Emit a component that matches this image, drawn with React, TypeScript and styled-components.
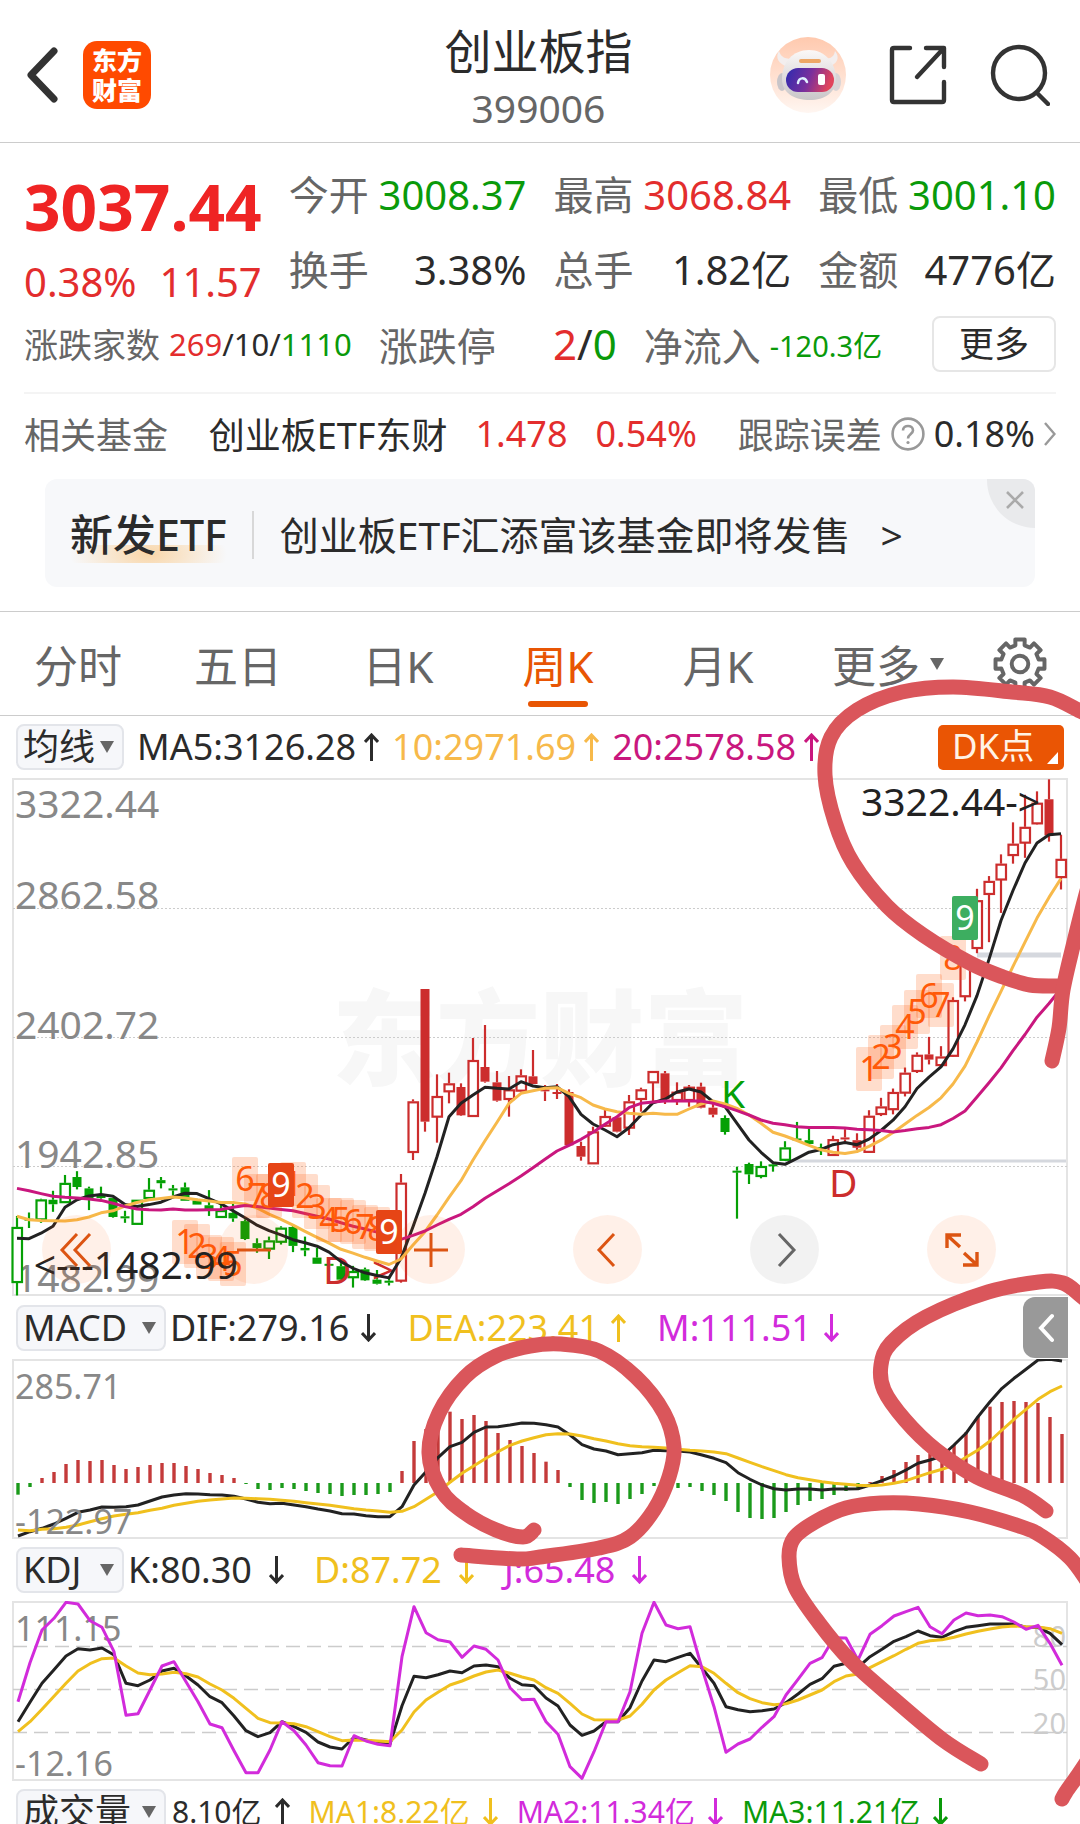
import React from "react";
import styled, { createGlobalStyle } from "styled-components";

const RED = "#e32d2d";
const GREEN = "#0a9a0a";
const INK = "#2b2b2b";
const GREY = "#666";
const ORANGE = "#e85504";
const GOLD = "#f0c01e";
const AMBER = "#f7b94a";
const MAGENTA = "#c9177e";
const VIOLET = "#d22bdb";
const FRAME = "#e4e4e4";
const UP = "#cc2d2d";
const DOWN = "#05a005";

const GlobalStyle = createGlobalStyle`
  *, *::before, *::after { box-sizing: border-box; }
  body {
    margin: 0;
    background: #fff;
    color: ${INK};
    font-family: "Noto Sans", "Noto Sans CJK SC", sans-serif;
  }
  button, select { font-family: inherit; color: inherit; background: none; border: 0; padding: 0; margin: 0; cursor: pointer; }
  a { color: inherit; text-decoration: none; }
  svg { display: block; }
`;

/* ---------- page shell ---------- */

const Page = styled.div`
  position: relative;
  height: 100vh;
  overflow: hidden;
  background: #fff;
`;

const Header = styled.header`
  display: grid;
  grid-template-columns: 1fr auto 1fr;
  align-items: center;
  height: 143px;
  padding: 0 30px 0 27px;
  border-bottom: 1px solid #ccc;
`;

const HeaderSide = styled.div<{ $end?: boolean }>`
  display: flex;
  align-items: center;
  gap: ${(p) => (p.$end ? 43 : 25)}px;
  justify-content: ${(p) => (p.$end ? "flex-end" : "flex-start")};
  padding-top: 8px;
`;

const IconButton = styled.button`
  display: grid;
  place-items: center;
`;

const Logo = styled.a`
  display: grid;
  place-content: center;
  width: 68px;
  height: 68px;
  border-radius: 14px;
  background: #ff4a00;
  color: #fff;
  font-size: 25px;
  font-weight: 900;
  line-height: 30px;
  text-align: center;
`;

const TitleBlock = styled.div`
  padding-top: 14px;
  text-align: center;
`;

const Title = styled.h1`
  margin: 0;
  font-size: 47px;
  font-weight: 400;
  line-height: 60px;
`;

const Code = styled.div`
  font-size: 39px;
  line-height: 54px;
  color: ${GREY};
`;

/* ---------- quote ---------- */

const Quote = styled.section`
  padding: 14px 24px 0;
`;

const QuoteGrid = styled.div`
  display: grid;
  grid-template-columns: repeat(4, 1fr);
  column-gap: 27px;
`;

const PriceColumn = styled.div`
  display: flex;
  flex-direction: column;
  padding-top: 12px;
  height: 150px;
  color: ${RED};
`;

const Price = styled.div`
  font-size: 64px;
  font-weight: 700;
  line-height: 75px;
  color: #ef2424;
`;

const Change = styled.div`
  display: flex;
  justify-content: space-between;
  font-size: 40px;
  line-height: 75px;
`;

const StatColumn = styled.div`
  display: flex;
  flex-direction: column;
`;

const Stat = styled.div`
  display: flex;
  justify-content: space-between;
  align-items: center;
  font-size: 40px;
  line-height: 75px;
  white-space: nowrap;
`;

const Label = styled.span<{ $size?: number }>`
  color: ${GREY};
  font-size: ${(p) => p.$size ?? 40}px;
`;

const Value = styled.span<{ $color?: string; $size?: number }>`
  color: ${(p) => p.$color ?? INK};
  font-size: ${(p) => (p.$size ? `${p.$size}px` : "inherit")};
`;

const BreadthRow = styled.div`
  display: flex;
  align-items: center;
  height: 87px;
  padding-bottom: 12px;
  border-bottom: 2px solid #f4f4f4;
  white-space: nowrap;
`;

const Breadth = styled.div<{ $width?: number }>`
  display: flex;
  align-items: center;
  justify-content: ${(p) => (p.$width ? "space-between" : "flex-start")};
  gap: 9px;
  width: ${(p) => (p.$width ? `${p.$width}px` : "auto")};
  margin-right: 27px;
`;

const MoreButton = styled.button`
  margin-left: auto;
  width: 124px;
  height: 56px;
  border: 2px solid #e6e6e6;
  border-radius: 8px;
  font-size: 35px;
  line-height: 48px;
`;

const FundRow = styled.a`
  display: flex;
  align-items: center;
  justify-content: space-between;
  height: 79px;
  font-size: 36px;
  white-space: nowrap;
`;

const FundGroup = styled.span<{ $gap: number }>`
  display: flex;
  align-items: center;
  gap: ${(p) => p.$gap}px;
`;

const Banner = styled.aside`
  position: relative;
  display: flex;
  align-items: center;
  height: 108px;
  margin: 6px 45px 24px;
  padding: 4px 26px 0 25px;
  border-radius: 12px;
  background: #f7f8fa;
  overflow: hidden;
  white-space: nowrap;
`;

const BannerTag = styled.strong`
  font-size: 43px;
  font-weight: 500;
  line-height: 60px;
  background: radial-gradient(ellipse 50% 200% at 50% 50%, #f9d6a8, rgba(249, 214, 168, 0)) no-repeat center 40px / 100% 18px;
`;

const BannerLink = styled.a`
  display: flex;
  gap: 30px;
  margin-left: 25px;
  padding-left: 26px;
  border-left: 2px solid #d8d8d8;
  font-size: 39px;
  line-height: 48px;
`;

const BannerClose = styled.button`
  position: absolute;
  top: 0;
  right: 0;
  width: 48px;
  height: 49px;
  padding: 0 0 8px 8px;
  display: grid;
  place-items: center;
  border-bottom-left-radius: 48px;
  background: #e9eaec;
`;

/* ---------- tabs ---------- */

const Tabs = styled.nav`
  display: grid;
  grid-template-columns: repeat(6, 4fr) 3fr;
  height: 105px;
  border-top: 1px solid #ccc;
  border-bottom: 1px solid #ccc;
`;

const Tab = styled.button<{ $active?: boolean }>`
  display: flex;
  align-items: center;
  justify-content: center;
  gap: 10px;
  position: relative;
  font-size: 44px;
  padding-right: 4px;
  color: ${(p) => (p.$active ? ORANGE : GREY)};
  &::after {
    content: "";
    display: ${(p) => (p.$active ? "block" : "none")};
    position: absolute;
    bottom: 8px;
    width: 60px;
    height: 6px;
    border-radius: 3px;
    background: ${ORANGE};
  }
`;

const MoreTab = styled(Tab)`
  padding-left: 20px;
`;

/* ---------- indicators ---------- */

const IndicatorBar = styled.div<{ $height: number }>`
  display: flex;
  align-items: center;
  height: ${(p) => p.$height}px;
  padding: 0 12px 0 16px;
  white-space: nowrap;
`;

const Picker = styled.label<{ $width: number }>`
  display: grid;
  align-items: center;
  flex: none;
  width: ${(p) => p.$width}px;
  height: 46px;
  border: 2px solid #e3e5ea;
  border-radius: 8px;
  background: #f6f7fa;
  & > * { grid-area: 1 / 1; }
  & > svg { justify-self: end; margin-right: 8px; pointer-events: none; }
`;

const PickerSelect = styled.select`
  appearance: none;
  width: 100%;
  height: 42px;
  padding-left: 5px;
  font-size: 36px;
  line-height: 42px;
  outline: none;
`;

const Readings = styled.div<{ $indent: number; $gap: number; $arrowGap: number; $size?: number }>`
  display: flex;
  gap: ${(p) => p.$gap}px;
  margin-left: ${(p) => p.$indent}px;
  font-size: ${(p) => p.$size ?? 36}px;
  line-height: 48px;
  & > span { gap: ${(p) => p.$arrowGap}px; }
`;

const ReadingItem = styled.span<{ $color: string }>`
  display: flex;
  align-items: center;
  color: ${(p) => p.$color};
`;

const DkButton = styled.button`
  display: flex;
  align-items: flex-end;
  justify-content: space-between;
  margin-left: auto;
  margin-right: 4px;
  width: 126px;
  height: 45px;
  padding: 0 6px 6px 14px;
  border-radius: 5px;
  background: #ea5504;
  color: #fff3e6;
  font-size: 35px;
  line-height: 36px;
`;

const CollapseButton = styled.button`
  display: grid;
  place-items: center;
  margin-left: auto;
  width: 45px;
  height: 61px;
  border-radius: 12px 0 0 12px;
  background: #999;
`;

const ChartPanel = styled.section`
  position: relative;
`;

const ChartSvg = styled.svg`
  width: 100%;
  height: auto;
  font-family: "Noto Sans", "Noto Sans CJK SC", sans-serif;
`;

const ChartControls = styled.div`
  position: absolute;
  left: 0;
  right: 0;
  bottom: 12px;
  display: flex;
  justify-content: space-between;
  padding: 0 84px 0 42px;
`;

const RoundButton = styled.button<{ $muted?: boolean }>`
  display: grid;
  place-items: center;
  width: 69px;
  height: 69px;
  border-radius: 50%;
  background: ${(p) => (p.$muted ? "rgba(0, 0, 0, 0.05)" : "rgba(255, 85, 0, 0.09)")};
  color: ${(p) => (p.$muted ? GREY : "#dc5412")};
`;

const InkLayer = styled.svg`
  position: absolute;
  top: 0;
  left: 0;
  width: 100%;
  height: auto;
  pointer-events: none;
`;

/* ---------- icons ---------- */

const Caret = ({ w = 14, h = 12 }: { w?: number; h?: number }) => (
  <svg width={w} height={h} viewBox="0 0 14 12" aria-hidden="true">
    <path d="M0 0H14L7 12Z" fill="#666" />
  </svg>
);

const Arrow = ({ down }: { down?: boolean }) => (
  <svg width="15" height="28" viewBox="0 0 15 28" fill="none" stroke="currentColor" strokeWidth="3" role="img" aria-label={down ? "down" : "up"}>
    <path d={down ? "M7.5 0V26M1 19L7.5 26L14 19" : "M7.5 28V2M1 9L7.5 2L14 9"} />
  </svg>
);

const BackIcon = () => (
  <svg width="31" height="56" viewBox="0 0 31 56" fill="none" stroke="#333" strokeWidth="7" strokeLinecap="round" strokeLinejoin="round">
    <path d="M27 4L4 28L27 52" />
  </svg>
);

const Robot = () => (
  <svg width="76" height="76" viewBox="0 0 76 76">
    <defs>
      <linearGradient id="halo" x1="0" y1="0" x2="0" y2="1">
        <stop offset="0" stopColor="#ffc9ae" />
        <stop offset="1" stopColor="#fff6f1" />
      </linearGradient>
      <linearGradient id="visor" x1="0" y1="0" x2="1" y2="0.2">
        <stop offset="0" stopColor="#2d2bb0" />
        <stop offset="0.55" stopColor="#7a2f9c" />
        <stop offset="1" stopColor="#e0445c" />
      </linearGradient>
      <linearGradient id="shell" x1="0" y1="0" x2="0" y2="1">
        <stop offset="0" stopColor="#fbf8f7" />
        <stop offset="1" stopColor="#c9c6c8" />
      </linearGradient>
    </defs>
    <circle cx="38" cy="38" r="38" fill="url(#halo)" />
    <path d="M18 30C8 27 5 20 9 14C11 21 16 22 24 22ZM58 30C68 27 70 20 65 14C64 21 59 22 52 22Z" fill="#f3eeee" />
    <ellipse cx="12" cy="45" rx="5" ry="9" fill="#c8c5c9" />
    <ellipse cx="66" cy="45" rx="5" ry="9" fill="#d8d4d6" />
    <path d="M39 13C55 13 66 26 66 42C66 56 54 63 40 63C24 63 12 56 12 42C12 25 23 13 39 13Z" fill="url(#shell)" />
    <rect x="29" y="22" width="22" height="4" rx="2" fill="#eda766" />
    <rect x="16" y="31" width="48" height="24" rx="12" fill="url(#visor)" />
    <path d="M28 46C29 40 35 40 37 45" stroke="#dff0ff" strokeWidth="2.5" fill="none" strokeLinecap="round" />
    <rect x="48" y="37" width="7" height="11" rx="2" fill="#fff" />
  </svg>
);

const ShareIcon = () => (
  <svg width="58" height="60" viewBox="0 0 58 60" fill="none" stroke="#333" strokeWidth="4.4" strokeLinecap="round" strokeLinejoin="round">
    <path d="M21 3H5Q3 3 3 5V55Q3 57 5 57H53Q55 57 55 55V37M37 3H55V22M54 4L28 32" />
  </svg>
);

const SearchIcon = () => (
  <svg width="60" height="62" viewBox="0 0 60 62" fill="none" stroke="#333" strokeWidth="4.4" strokeLinecap="round">
    <circle cx="29" cy="29" r="26" />
    <path d="M47 49L58 60" />
  </svg>
);

const HelpIcon = () => (
  <svg width="34" height="34" viewBox="0 0 34 34" fill="none" stroke="#999" strokeWidth="2.6" role="img" aria-label="help">
    <circle cx="17" cy="17" r="15.4" />
    <path d="M12 13.5C12 7.5 22 7.5 22 13.5C22 17 17 17 17 21.5" />
    <circle cx="17" cy="25.5" r="1.6" fill="#999" stroke="none" />
  </svg>
);

const Chevron = () => (
  <svg width="12" height="24" viewBox="0 0 12 24" fill="none" stroke="#999" strokeWidth="2.4">
    <path d="M1 1L10.5 12L1 23" />
  </svg>
);

/* eight blunt teeth around a hub */
const GearIcon = () => {
  const teeth = 8;
  const pts: string[] = [];
  for (let i = 0; i < teeth; i++) {
    const base = (i * 2 * Math.PI) / teeth - Math.PI / 2;
    [
      [-0.24, 18.5],
      [-0.19, 24],
      [0.19, 24],
      [0.24, 18.5],
    ].forEach(([a, r]) => pts.push(`${26 + r * Math.cos(base + a)} ${26 + r * Math.sin(base + a)}`));
  }
  return (
    <svg width="54" height="54" viewBox="0 0 52 52" fill="none" stroke="#666" strokeWidth="3.8" strokeLinejoin="round">
      <path d={`M${pts.join("L")}Z`} />
      <circle cx="26" cy="26" r="8" />
    </svg>
  );
};

const Glyph = ({ d, size = 36, w = 3 }: { d: string; size?: number; w?: number }) => (
  <svg width={size} height={size} viewBox="0 0 36 36" fill="none" stroke="currentColor" strokeWidth={w}>
    <path d={d} />
  </svg>
);

/* ---------- chart data: vertical positions, one entry per week ---------- */

const X0 = 17;
const STEP = 12;
const cx = (i: number) => X0 + STEP * i;

const scaled = (k: number, o: number, v: number[]) => v.map((n) => n / k + o);
const line = (ys: number[], dx = 0) => ys.map((y, i) => `${i ? "L" : "M"}${cx(i) + dx} ${y.toFixed(1)}`).join("");

const outer = (v: number[]) => scaled(2.904, -8, v);
const inner = (v: number[]) => scaled(3, 182, v);

/* body top, body bottom, high, low, filled */
type Candle = [number, number, number, number, 0 | 1];

const EARLY: Candle[] = [
  [1327, 1487, 1295, 1526, 0], [1303, 1308, 1285, 1330, 1], [1247, 1305, 1245, 1315, 0], [1248, 1261, 1222, 1283, 1],
  [1199, 1255, 1176, 1257, 0], [1182, 1211, 1165, 1218, 1], [1215, 1245, 1210, 1278, 1], [1237, 1243, 1210, 1245, 1],
  [1243, 1298, 1243, 1300, 1], [1296, 1302, 1280, 1315, 1], [1248, 1318, 1248, 1318, 0], [1219, 1243, 1185, 1250, 0],
  [1191, 1200, 1182, 1215, 1], [1215, 1221, 1205, 1235, 1], [1212, 1251, 1198, 1251, 1], [1250, 1262, 1245, 1262, 1],
  [1264, 1280, 1220, 1295, 1], [1278, 1298, 1262, 1300, 0], [1286, 1302, 1252, 1312, 1], [1310, 1362, 1305, 1365, 1],
  [1374, 1388, 1360, 1402, 1], [1366, 1390, 1355, 1420, 0], [1329, 1370, 1325, 1378, 0], [1327, 1382, 1320, 1400, 1],
  [1388, 1395, 1355, 1412, 1], [1416, 1434, 1388, 1434, 1], [1434, 1437, 1434, 1437, 1], [1441, 1480, 1432, 1485, 1],
  [1455, 1473, 1440, 1503, 0], [1450, 1482, 1445, 1484, 1], [1480, 1492, 1452, 1494, 1], [1483, 1489, 1470, 1497, 1],
];

const MIDDLE: Candle[] = [
  [668, 962, 642, 968, 0], [424, 576, 418, 600, 0], [87, 485, 87, 515, 1], [408, 470, 343, 548, 0],
  [370, 394, 338, 430, 0], [381, 466, 370, 468, 1], [300, 468, 234, 468, 0], [321, 365, 195, 368, 1],
  [367, 422, 333, 425, 1], [388, 417, 348, 470, 0], [346, 392, 328, 394, 0], [349, 372, 270, 372, 1],
  [388, 394, 375, 423, 1], [396, 402, 372, 417, 1], [396, 556, 388, 556, 1], [558, 590, 545, 602, 1],
  [514, 610, 500, 612, 0], [468, 497, 450, 500, 0], [472, 515, 470, 517, 1], [424, 503, 405, 525, 0],
  [388, 417, 383, 455, 0], [333, 367, 333, 425, 0], [340, 418, 333, 432, 1], [395, 420, 367, 435, 0],
  [380, 420, 375, 440, 0], [380, 443, 368, 445, 1], [443, 464, 425, 472, 1], [474, 516, 466, 524, 1],
  [632, 637, 620, 776, 1], [612, 643, 608, 672, 1], [618, 648, 604, 655, 0], [613, 618, 610, 635, 1],
];

const LATE: Candle[] = [
  [1096, 1132, 1078, 1135, 0], [1070, 1075, 1022, 1077, 1], [1075, 1086, 1040, 1088, 1], [1095, 1101, 1085, 1118, 1],
  [1072, 1118, 1062, 1120, 0], [1067, 1073, 1043, 1085, 1], [1075, 1097, 1055, 1103, 1], [1004, 1109, 988, 1112, 0],
  [977, 999, 952, 1005, 0], [935, 985, 925, 1000, 0], [879, 937, 864, 948, 0], [827, 874, 820, 880, 0],
  [826, 841, 775, 855, 1], [832, 857, 802, 858, 0], [668, 830, 660, 832, 0], [560, 657, 560, 672, 0],
  [378, 517, 345, 532, 0], [322, 360, 308, 500, 0], [272, 318, 245, 415, 0], [214, 247, 152, 272, 0],
  [165, 211, 72, 255, 0], [95, 155, 62, 158, 0], [85, 190, 27, 208, 1], [258, 311, 188, 347, 0],
];

const place = (rows: Candle[], f: (v: number[]) => number[]) =>
  rows.map((r) => {
    const [top, bottom, high, low] = f(r.slice(0, 4) as number[]);
    return { top, bottom, high, low, filled: r[4] === 1 };
  });

const CANDLES = [...place(EARLY, outer), ...place(MIDDLE, inner), ...place(LATE, outer)];
const isDown = (i: number) => i < 32 || (i >= 59 && i <= 67);

const MA5 = [
  ...outer([1360, 1361, 1345, 1325, 1270, 1248, 1237, 1233, 1238, 1262, 1268, 1262, 1255, 1240, 1229, 1230, 1245, 1260, 1280, 1300, 1322, 1338, 1350, 1364, 1373, 1383, 1400, 1428, 1447, 1460, 1468, 1475]),
  ...inner([895, 800, 700, 590, 470, 430, 405, 382, 385, 387, 365, 378, 383, 380, 410, 463, 492, 510, 530, 503, 465, 428, 418, 396, 387, 396, 425, 440, 490, 540, 577, 608]),
  ...outer([1145, 1128, 1110, 1102, 1088, 1082, 1088, 1072, 1047, 1017, 978, 925, 892, 862, 810, 740, 655, 550, 437, 350, 270, 212, 188, 185]),
];
const MA10 = [
  ...outer([1296, 1306, 1308, 1309, 1310, 1306, 1298, 1286, 1280, 1266, 1256, 1248, 1244, 1240, 1243, 1248, 1252, 1256, 1256, 1260, 1272, 1290, 1305, 1322, 1340, 1357, 1374, 1392, 1403, 1415, 1426, 1436]),
  ...inner([897, 855, 815, 765, 712, 662, 600, 542, 487, 430, 400, 392, 385, 383, 400, 413, 435, 447, 455, 460, 463, 460, 463, 463, 447, 432, 423, 432, 445, 465, 490, 517]),
  ...outer([1063, 1076, 1090, 1103, 1110, 1114, 1108, 1093, 1075, 1053, 1028, 1003, 980, 952, 912, 860, 790, 715, 643, 570, 500, 430, 370, 315]),
];
const MA20 = [
  ...outer([1215, 1222, 1230, 1238, 1241, 1243, 1246, 1250, 1258, 1268, 1275, 1277, 1278, 1275, 1278, 1278, 1277, 1276, 1270, 1265, 1268, 1272, 1276, 1280, 1288, 1296, 1304, 1315, 1325, 1333, 1342, 1352]),
  ...inner([838, 826, 813, 795, 778, 763, 740, 715, 693, 671, 648, 623, 598, 573, 556, 538, 517, 493, 470, 443, 430, 426, 423, 423, 423, 423, 430, 440, 452, 465, 480, 490]),
  ...outer([1030, 1036, 1038, 1038, 1038, 1040, 1043, 1045, 1047, 1051, 1047, 1042, 1038, 1030, 1012, 990, 950, 908, 865, 815, 768, 718, 678, 635]),
];

/* sequence counters: week, digit, box top, solid colour */
const COUNTS: [number, string, number, string?][] = [
  [14, "1", 442], [15, "2", 446], [16, "3", 457], [17, "4", 459], [18, "5", 464],
  [19, "6", 379], [20, "7", 396], [21, "8", 396], [23, "1", 384], [24, "2", 396], [25, "3", 407],
  [26, "4", 420], [27, "5", 420], [28, "6", 422], [29, "7", 427], [30, "8", 429],
  [71, "1", 269], [72, "2", 257], [73, "3", 247], [74, "4", 227], [75, "5", 212], [76, "6", 196], [77, "7", 205], [78, "8", 158],
  [22, "9", 385, "#e64516"], [31, "9", 432, "#e64516"], [79, "9", 118, "#3dae60"],
];

const macdL = (v: number[]) => scaled(3, -69, v);
const macdR = (v: number[]) => scaled(3, -89, v);

const BARS = [
  ...macdL([614, 591, 564, 546, 522, 510, 513, 510, 525, 537, 531, 525, 519, 519, 528, 537, 549, 555, 564, 582, 597, 600, 594, 597, 603, 609, 612, 618, 615, 615, 612, 606, 543, 453, 417, 400, 365, 387, 375, 393, 429, 450, 468, 489]),
  ...macdR([575, 600, 651, 690, 699, 696, 702, 687, 672, 648, 642, 654, 651, 663, 675, 693, 726, 744, 747, 744, 726, 705, 693, 687, 675, 663, 660, 636, 618, 600, 576, 555, 550, 548, 525, 487, 440, 410, 396, 393, 396, 399, 441, 492]),
];
const DIF = [
  ...macdL([738, 725, 715, 702, 685, 667, 660, 651, 652, 650, 645, 633, 621, 615, 611, 612, 614, 615, 619, 627, 637, 641, 640, 645, 650, 657, 663, 671, 672, 677, 680, 680, 650, 585, 545, 503, 470, 457, 427, 411, 410, 405, 399, 400]),
  ...macdR([464, 471, 495, 524, 537, 543, 554, 551, 548, 541, 542, 543, 546, 555, 565, 578, 608, 628, 645, 656, 660, 657, 657, 660, 657, 657, 656, 645, 632, 618, 600, 580, 570, 558, 525, 490, 440, 395, 355, 325, 298, 270, 268, 273]),
];
const DEA = [
  ...macdL([720, 722, 718, 716, 712, 705, 695, 686, 678, 673, 668, 661, 655, 646, 640, 634, 630, 627, 624, 625, 626, 628, 631, 634, 638, 642, 646, 651, 656, 660, 663, 667, 664, 650, 628, 605, 577, 550, 527, 505, 485, 466, 453, 443]),
  ...macdR([494, 491, 492, 498, 506, 513, 521, 527, 530, 532, 534, 538, 541, 543, 546, 551, 564, 577, 590, 602, 614, 623, 629, 635, 640, 643, 646, 647, 645, 640, 632, 620, 608, 598, 585, 562, 540, 513, 480, 448, 418, 388, 365, 348]),
];

const kdj = (v: number[]) => scaled(3, -61, v);
const K_LINE = kdj([545, 487, 430, 389, 348, 326, 330, 324, 345, 430, 437, 420, 393, 385, 408, 435, 470, 488, 528, 572, 590, 578, 545, 560, 577, 606, 621, 627, 592, 600, 608, 612, 497, 409, 413, 404, 393, 398, 378, 375, 380, 415, 434, 437, 474, 498, 555, 586, 573, 545, 545, 503, 423, 360, 365, 352, 340, 385, 430, 500, 509, 515, 512, 507, 488, 462, 433, 416, 379, 370, 382, 350, 328, 304, 290, 273, 287, 292, 275, 262, 257, 252, 252, 252, 262, 262, 280, 314]);
const D_LINE = kdj([575, 545, 508, 469, 430, 393, 371, 356, 354, 378, 399, 404, 402, 397, 401, 411, 432, 450, 475, 505, 535, 548, 549, 551, 560, 575, 590, 602, 600, 601, 603, 605, 570, 516, 480, 457, 435, 423, 408, 396, 390, 400, 411, 420, 443, 460, 490, 522, 539, 540, 540, 528, 493, 450, 420, 398, 377, 380, 400, 430, 458, 476, 488, 494, 491, 480, 465, 450, 425, 408, 402, 383, 365, 347, 328, 310, 302, 299, 292, 282, 274, 267, 261, 258, 260, 261, 266, 280]);
const J_LINE = kdj([485, 368, 270, 235, 187, 192, 242, 262, 335, 526, 521, 450, 378, 365, 425, 485, 552, 563, 632, 698, 698, 630, 545, 572, 615, 668, 677, 678, 587, 603, 613, 617, 350, 200, 278, 299, 306, 352, 318, 328, 360, 443, 479, 478, 545, 583, 680, 715, 635, 545, 545, 455, 280, 187, 255, 266, 260, 385, 500, 637, 612, 597, 562, 530, 465, 418, 370, 353, 293, 294, 360, 283, 257, 228, 215, 202, 260, 281, 240, 219, 227, 225, 230, 246, 268, 256, 310, 376]);

/* ---------- charts ---------- */

const Frame = ({ h }: { h: number }) => <rect x="13" y="1" width="1054" height={h} fill="none" stroke={FRAME} strokeWidth="2" />;

const PriceChart = () => (
  <ChartSvg viewBox="0 0 1080 518" role="img" aria-label="周K">
    <text x="540" y="300" textAnchor="middle" fontSize="104" fontWeight="900" fill="#f7f7f7">东方财富</text>
    <Frame h={516} />
    {[130, 259, 388].map((y) => (
      <path key={y} d={`M13 ${y}.5H1067`} stroke="#ccc" strokeDasharray="2 2" />
    ))}
    <path d="M977 177H1061" stroke="#d5d8de" strokeWidth="5" />
    <path d="M785 383H1066" stroke="#d5d8de" strokeWidth="3" />
    <g fontSize="39" fill="#888">
      <text x="15" y="40">3322.44</text>
      <text x="15" y="131">2862.58</text>
      <text x="15" y="261">2402.72</text>
      <text x="15" y="390">1942.85</text>
      <text x="15" y="514">1482.99</text>
    </g>
    {CANDLES.map((c, i) => {
      const color = isDown(i) ? DOWN : UP;
      const h = Math.max(c.bottom - c.top, 2);
      return (
        <g key={i} stroke={color} strokeWidth="2.2">
          {c.high < c.top && <path d={`M${cx(i)} ${c.high}V${c.top}`} />}
          {c.low > c.bottom && <path d={`M${cx(i)} ${c.bottom}V${c.low}`} />}
          {c.filled ? (
            <rect x={cx(i) - 4.5} y={c.top} width="9" height={h} fill={color} stroke="none" />
          ) : (
            <rect x={cx(i) - 4.5} y={c.top + 1} width="9.5" height={h - 1} fill="#fff" />
          )}
        </g>
      );
    })}
    <g fontSize="39">
      <text x="323" y="506" fill={UP}>D</text>
      <text x="372" y="506" fill={UP}>&gt;</text>
      <text x="829" y="419" fill={UP}>D</text>
      <text x="721" y="330" fill={DOWN}>K</text>
    </g>
    <g fill="none" strokeWidth="3" strokeLinejoin="round">
      <path d={line(MA5)} stroke="#222" />
      <path d={line(MA10)} stroke={AMBER} />
      <path d={line(MA20)} stroke={MAGENTA} />
    </g>
    {COUNTS.map(([i, n, top, solid], k) => (
      <g key={k}>
        <rect x={cx(i) - 13} y={top} width="26" height="44" rx="2" fill={solid ?? "rgba(255,85,0,.2)"} />
        <text x={cx(i)} y={top + 34} fontSize="34" textAnchor="middle" fill={solid ? "#fff" : "#ff5a0a"}>{n}</text>
      </g>
    ))}
    <g fontSize="39" fill="#222">
      <text x="861" y="38">3322.44-&gt;</text>
      <text x="238" y="501" textAnchor="end">&lt;---1482.99</text>
    </g>
  </ChartSvg>
);

const MacdChart = () => (
  <ChartSvg viewBox="0 0 1080 180" role="img" aria-label="MACD">
    <Frame h={178} />
    {BARS.map((y, i) => (
      <path key={i} d={`M${cx(i) + 1} 124V${y}`} stroke={y < 124 ? "#c43a3a" : "#1a9a1a"} strokeWidth="3.4" />
    ))}
    <g fill="none" strokeWidth="3" strokeLinejoin="round">
      <path d={line(DIF, 1)} stroke="#222" />
      <path d={line(DEA, 1)} stroke={GOLD} />
    </g>
    <g fontSize="34" fill="#888">
      <text x="15" y="40">285.71</text>
      <text x="15" y="175">-122.97</text>
    </g>
  </ChartSvg>
);

const KdjChart = () => (
  <ChartSvg viewBox="0 0 1080 180" role="img" aria-label="KDJ">
    <Frame h={178} />
    {[45, 88, 131].map((y) => (
      <path key={y} d={`M13 ${y}.5H1067`} stroke="#ccc" strokeWidth="1.5" strokeDasharray="14 7" />
    ))}
    <g fontSize="29" fill="#ccc" textAnchor="end">
      <text x="1066" y="46">80</text>
      <text x="1066" y="89">50</text>
      <text x="1066" y="133">20</text>
    </g>
    <g fontSize="34" fill="#888">
      <text x="15" y="40">111.15</text>
      <text x="15" y="175">-12.16</text>
    </g>
    <g fill="none" strokeWidth="3" strokeLinejoin="round">
      <path d={line(K_LINE, 1)} stroke="#222" />
      <path d={line(D_LINE, 1)} stroke={GOLD} />
      <path d={line(J_LINE, 1)} stroke={VIOLET} />
    </g>
  </ChartSvg>
);

/* smooth freehand stroke through a list of points */
const smooth = (p: number[][]) => {
  let d = `M${p[0][0]} ${p[0][1]}`;
  for (let i = 0; i < p.length - 1; i++) {
    const a = p[i - 1] ?? p[i];
    const b = p[i];
    const c = p[i + 1];
    const e = p[i + 2] ?? c;
    d += `C${b[0] + (c[0] - a[0]) / 6} ${b[1] + (c[1] - a[1]) / 6} ${c[0] - (e[0] - b[0]) / 6} ${c[1] - (e[1] - b[1]) / 6} ${c[0]} ${c[1]}`;
  }
  return d;
};

const STROKES = [
  [[1092, 717], [1080, 711], [1050, 697], [1012, 692], [953, 687], [902, 692], [857, 710], [831, 737], [825, 775], [835, 822], [853, 863], [887, 906], [923, 935], [970, 963], [1003, 977], [1030, 985], [1057, 986]],
  [[1090, 880], [1084, 902], [1074, 942], [1063, 990], [1059, 1028], [1052, 1061]],
  [[534, 1530], [523, 1537], [496, 1530], [465, 1513], [441, 1490], [429, 1453], [439, 1413], [465, 1377], [496, 1356], [530, 1346], [561, 1344], [599, 1351], [636, 1377], [664, 1413], [674, 1447], [669, 1477], [654, 1510], [630, 1537], [599, 1548], [540, 1557], [517, 1559], [461, 1555]],
  [[1090, 1304], [1080, 1295], [1063, 1283], [1039, 1282], [988, 1292], [926, 1317], [891, 1343], [881, 1365], [884, 1390], [905, 1420], [936, 1450], [977, 1477], [1022, 1495], [1046, 1511]],
  [[1088, 1582], [1070, 1558], [1043, 1537], [1022, 1527], [970, 1512], [919, 1504], [881, 1503], [846, 1508], [815, 1522], [794, 1538], [789, 1557], [795, 1587], [819, 1623], [850, 1660], [895, 1700], [943, 1740], [981, 1764]],
  [[1090, 1757], [1078, 1775], [1066, 1792], [1062, 1799]],
];

const Annotations = () => (
  <InkLayer viewBox="0 0 1080 1824" fill="none" stroke="#da565b" strokeWidth="15" strokeLinecap="round" strokeLinejoin="round" aria-hidden="true">
    {STROKES.map((s, i) => (
      <path key={i} d={smooth(s)} />
    ))}
  </InkLayer>
);

/* ---------- small composites ---------- */

const StatLine = ({ label, value, color }: { label: string; value: string; color?: string }) => (
  <Stat>
    <Label>{label}</Label>
    <Value $color={color}>{value}</Value>
  </Stat>
);

const Reading = ({ text, color, down }: { text: string; color: string; down?: boolean }) => (
  <ReadingItem $color={color}>
    {text}
    <Arrow down={down} />
  </ReadingItem>
);

const IndicatorPicker = ({ name, width }: { name: string; width: number }) => (
  <Picker $width={width}>
    <PickerSelect aria-label={name} defaultValue={name}>
      <option>{name}</option>
    </PickerSelect>
    <Caret />
  </Picker>
);

export default function App() {
  return (
    <Page lang="zh-CN">
      <GlobalStyle />

      <Header>
        <HeaderSide>
          <IconButton aria-label="返回"><BackIcon /></IconButton>
          <Logo href="#">东方<br />财富</Logo>
        </HeaderSide>
        <TitleBlock>
          <Title>创业板指</Title>
          <Code>399006</Code>
        </TitleBlock>
        <HeaderSide $end>
          <IconButton aria-label="助手"><Robot /></IconButton>
          <IconButton aria-label="分享"><ShareIcon /></IconButton>
          <IconButton aria-label="搜索"><SearchIcon /></IconButton>
        </HeaderSide>
      </Header>

      <Quote>
        <QuoteGrid>
          <PriceColumn>
            <Price>3037.44</Price>
            <Change><span>0.38%</span><span>11.57</span></Change>
          </PriceColumn>
          <StatColumn>
            <StatLine label="今开" value="3008.37" color={GREEN} />
            <StatLine label="换手" value="3.38%" />
          </StatColumn>
          <StatColumn>
            <StatLine label="最高" value="3068.84" color={RED} />
            <StatLine label="总手" value="1.82亿" />
          </StatColumn>
          <StatColumn>
            <StatLine label="最低" value="3001.10" color={GREEN} />
            <StatLine label="金额" value="4776亿" />
          </StatColumn>
        </QuoteGrid>
        <BreadthRow>
          <Breadth>
            <Label $size={34}>涨跌家数</Label>
            <Value $size={31}>
              <Value $color={RED}>269</Value>/10/<Value $color={GREEN}>1110</Value>
            </Value>
          </Breadth>
          <Breadth $width={238}>
            <Label $size={39}>涨跌停</Label>
            <Value $size={42}>
              <Value $color={RED}>2</Value>/<Value $color={GREEN}>0</Value>
            </Value>
          </Breadth>
          <Breadth>
            <Label $size={39}>净流入</Label>
            <Value $color={GREEN} $size={29}>-120.3亿</Value>
          </Breadth>
          <MoreButton>更多</MoreButton>
        </BreadthRow>
        <FundRow href="#">
          <Label $size={36}>相关基金</Label>
          <FundGroup $gap={28}>
            <Value>创业板ETF东财</Value>
            <Value $color={RED}>1.478</Value>
            <Value $color={RED}>0.54%</Value>
          </FundGroup>
          <FundGroup $gap={9}>
            <Label $size={36}>跟踪误差</Label>
            <HelpIcon />
            <Value>0.18%</Value>
            <Chevron />
          </FundGroup>
        </FundRow>
      </Quote>

      <Banner>
        <BannerTag>新发ETF</BannerTag>
        <BannerLink href="#">
          <span>创业板ETF汇添富该基金即将发售</span>
          <span>&gt;</span>
        </BannerLink>
        <BannerClose aria-label="关闭">
          <svg width="18" height="18" viewBox="0 0 18 18" stroke="#aaa" strokeWidth="2.6"><path d="M1 1L17 17M17 1L1 17" /></svg>
        </BannerClose>
      </Banner>

      <Tabs>
        <Tab>分时</Tab>
        <Tab>五日</Tab>
        <Tab>日K</Tab>
        <Tab $active>周K</Tab>
        <Tab>月K</Tab>
        <MoreTab>更多<Caret /></MoreTab>
        <IconButton aria-label="设置"><GearIcon /></IconButton>
      </Tabs>

      <IndicatorBar $height={62}>
        <IndicatorPicker name="均线" width={108} />
        <Readings $indent={13} $gap={13} $arrowGap={8}>
          <Reading text="MA5:3126.28" color={INK} />
          <Reading text="10:2971.69" color={AMBER} />
          <Reading text="20:2578.58" color={MAGENTA} />
        </Readings>
        <DkButton>
          DK点
          <svg width="11" height="12" viewBox="0 0 11 12"><path d="M11 0V12H0Z" fill="#fff" /></svg>
        </DkButton>
      </IndicatorBar>

      <ChartPanel>
        <PriceChart />
        <ChartControls>
          <RoundButton aria-label="最早"><Glyph d="M18 2L3 18L18 34M31 2L16 18L31 34" /></RoundButton>
          <RoundButton aria-label="缩小"><Glyph d="M1 18H35" /></RoundButton>
          <RoundButton aria-label="放大"><Glyph d="M1 18H35M18 1V35" /></RoundButton>
          <RoundButton aria-label="前移"><Glyph d="M24 2L9 18L24 34" /></RoundButton>
          <RoundButton aria-label="后移" $muted><Glyph d="M12 2L27 18L12 34" /></RoundButton>
          <RoundButton aria-label="全屏"><Glyph d="M3 16V3H17M4 4L16 15M33 20V33H19M32 32L20 21" w={3.4} /></RoundButton>
        </ChartControls>
      </ChartPanel>

      <IndicatorBar $height={63}>
        <IndicatorPicker name="MACD" width={150} />
        <Readings $indent={4} $gap={31} $arrowGap={12}>
          <Reading text="DIF:279.16" color={INK} down />
          <Reading text="DEA:223.41" color={GOLD} />
          <Reading text="M:111.51" color={VIOLET} down />
        </Readings>
        <CollapseButton aria-label="收起">
          <svg width="16" height="30" viewBox="0 0 16 30" fill="none" stroke="#fff" strokeWidth="4" strokeLinecap="round"><path d="M14 3L3 15L14 27" /></svg>
        </CollapseButton>
      </IndicatorBar>
      <ChartPanel><MacdChart /></ChartPanel>

      <IndicatorBar $height={62}>
        <IndicatorPicker name="KDJ" width={108} />
        <Readings $indent={4} $gap={30} $arrowGap={17}>
          <Reading text="K:80.30" color={INK} down />
          <Reading text="D:87.72" color={GOLD} down />
          <Reading text="J:65.48" color={VIOLET} down />
        </Readings>
      </IndicatorBar>
      <ChartPanel><KdjChart /></ChartPanel>

      <IndicatorBar $height={62}>
        <IndicatorPicker name="成交量" width={150} />
        <Readings $indent={6} $gap={19} $arrowGap={13} $size={30}>
          <Reading text="8.10亿" color={INK} />
          <Reading text="MA1:8.22亿" color={GOLD} down />
          <Reading text="MA2:11.34亿" color={VIOLET} down />
          <Reading text="MA3:11.21亿" color={GREEN} down />
        </Readings>
      </IndicatorBar>

      <Annotations />
    </Page>
  );
}
